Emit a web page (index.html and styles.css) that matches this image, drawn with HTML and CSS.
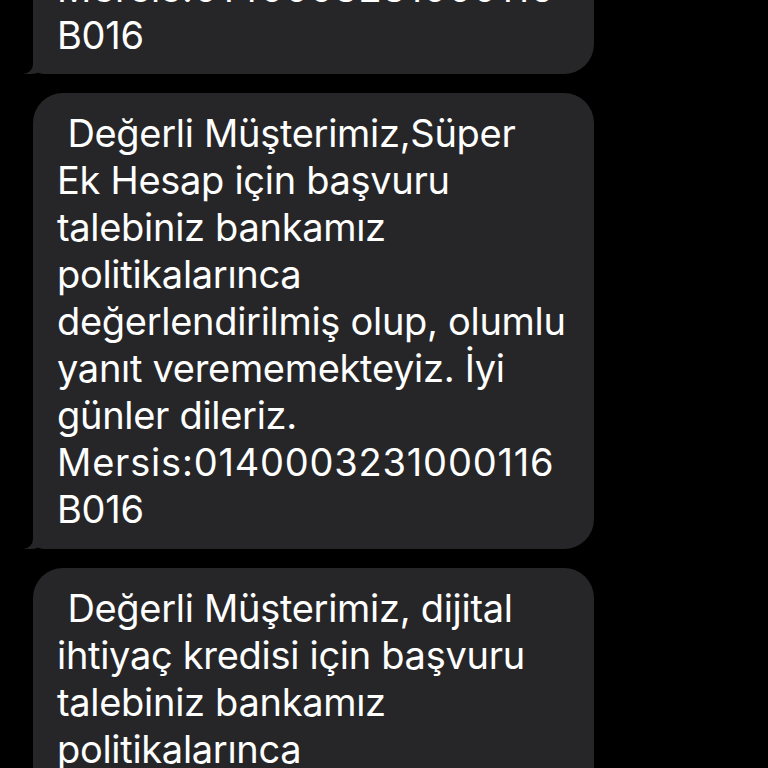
FILE: index.html
```html
<!DOCTYPE html>
<html lang="tr">
<head>
<meta charset="utf-8">
<link rel="stylesheet" href="styles.css">
</head>
<body>
<div class="thread">
  <div class="bubble bubble-first"><span class="num">Mersis:0140003231000116</span><br>B016</div>
  <div class="bubble">&nbsp;Değerli Müşterimiz,Süper<br>Ek Hesap için başvuru<br>talebiniz bankamız<br>politikalarınca<br>değerlendirilmiş olup, olumlu<br>yanıt verememekteyiz. İyi<br>günler dileriz.<br><span class="num">Mersis:0140003231000116</span><br>B016</div>
  <div class="bubble">&nbsp;Değerli Müşterimiz, dijital<br>ihtiyaç kredisi için başvuru<br>talebiniz bankamız<br>politikalarınca<br>değerlendirilmiş olup, olumlu<br>yanıt verememekteyiz. İyi<br>günler dileriz.</div>
</div>
</body>
</html>
```

FILE: styles.css
```css
html, body {
  margin: 0;
  padding: 0;
  background: #000;
  height: 768px;
  overflow: hidden;
}
.thread {
  display: flex;
  flex-direction: column;
  gap: 19px;
  padding-left: 33px;
}
.bubble {
  position: relative;
  box-sizing: border-box;
  width: 561px;
  padding: 16.5px 10px 15.5px 24px;
  background: #262628;
  color: #fff;
  border-radius: 30px;
  border-bottom-left-radius: 10px;
  font-family: Inter, "Noto Sans", sans-serif;
  font-size: 38px;
  line-height: 47.1px;
  letter-spacing: -0.3px;
  white-space: nowrap;
}
.num {
  letter-spacing: 0.8px;
}
.bubble::before {
  content: "";
  position: absolute;
  left: -10px;
  bottom: 0;
  width: 24px;
  height: 22px;
  background: #262628;
  border-bottom-right-radius: 16px 14px;
}
.bubble::after {
  content: "";
  position: absolute;
  left: -14px;
  bottom: 0;
  width: 14px;
  height: 22px;
  background: #000;
  border-bottom-right-radius: 10px;
}
.bubble-first {
  margin-top: -52px;
}
```
